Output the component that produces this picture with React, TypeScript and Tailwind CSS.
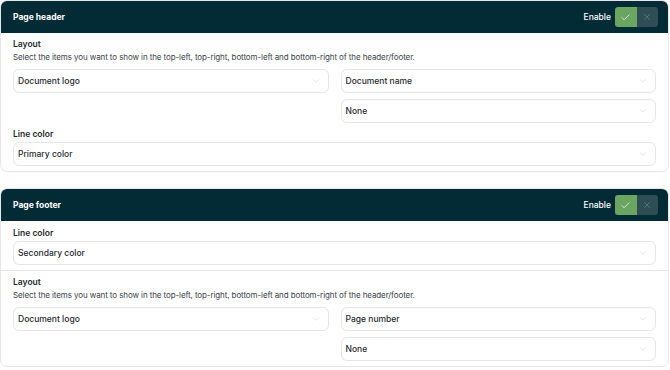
import React from "react";
import { Check, ChevronDown, X } from "lucide-react";

function Select({ value }: { value: string }) {
  return (
    <div className="flex h-6 items-center justify-between rounded-md border border-[#e4e6e9] bg-white pl-[4px] pr-[7px]">
      <span className="text-[8.5px] font-medium text-[#1f2a30]">{value}</span>
      <ChevronDown size={10} strokeWidth={1} className="text-[#b8bec4]" />
    </div>
  );
}

function Toggle() {
  return (
    <div className="flex h-5 w-[43px] overflow-hidden rounded-[3px]">
      <div className="flex flex-1 items-center justify-center bg-[#6aa562]">
        <Check size={11} strokeWidth={1.5} className="text-white" />
      </div>
      <div className="flex flex-1 items-center justify-center bg-[#2f4d55]">
        <X size={10} strokeWidth={1.5} className="text-[#6e8389]" />
      </div>
    </div>
  );
}

function CardHeader({ title }: { title: string }) {
  return (
    <div className="flex h-8 items-center justify-between rounded-t-[6px] bg-[#022b36] pl-3 pr-[10px]">
      <span className="text-[8.5px] font-bold text-white">{title}</span>
      <div className="flex items-center gap-[4px]">
        <span className="text-[8.5px] font-medium text-white">Enable</span>
        <Toggle />
      </div>
    </div>
  );
}

function LayoutSection({ left, right }: { left: string; right: string }) {
  return (
    <div>
      <div className="text-[8.5px] font-semibold leading-[13px] text-[#1f2a30]">Layout</div>
      <div className="text-[8px] leading-[13px] tracking-[-0.1px] text-[#39444b]">
        Select the items you want to show in the top-left, top-right, bottom-left and bottom-right of the header/footer.
      </div>
      <div className="mt-[5px] grid grid-cols-2 gap-3">
        <div>
          <Select value={left} />
        </div>
        <div className="flex flex-col gap-[6px]">
          <Select value={right} />
          <Select value="None" />
        </div>
      </div>
    </div>
  );
}

function LineColor({ value }: { value: string }) {
  return (
    <div>
      <div className="text-[8.5px] font-semibold leading-[12px] text-[#1f2a30]">Line color</div>
      <div className="mt-[2px]">
        <Select value={value} />
      </div>
    </div>
  );
}

export default function App() {
  return (
    <div
      className="h-[370px] w-[670px] bg-white pl-0 pr-[1px]"
      style={{ fontFamily: "Inter, 'Noto Sans', sans-serif" }}
    >
      {/* Page header */}
      <div className="rounded-[7px] border border-[#e4e6e9]">
        <CardHeader title="Page header" />
        <div className="px-3 pb-[5px] pt-[5px]">
          <LayoutSection left="Document logo" right="Document name" />
          <div className="mt-[5px]">
            <LineColor value="Primary color" />
          </div>
        </div>
      </div>

      {/* Page footer */}
      <div className="mt-[16px] rounded-[7px] border border-[#e4e6e9]">
        <CardHeader title="Page footer" />
        <div className="px-3 pb-[5px] pt-[6px]">
          <LineColor value="Secondary color" />
        </div>
        <div className="border-t border-[#e4e6e9] px-3 pb-[5px] pt-[5px]">
          <LayoutSection left="Document logo" right="Page number" />
        </div>
      </div>
    </div>
  );
}
